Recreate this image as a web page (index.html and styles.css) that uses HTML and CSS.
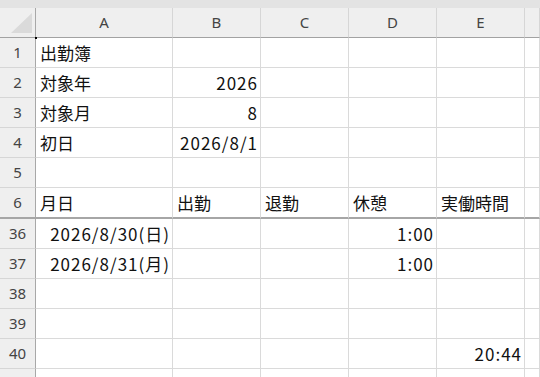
FILE: index.html
```html
<!DOCTYPE html>
<html lang="ja">
<head>
    <meta charset="UTF-8">
    <meta name="viewport" content="width=device-width, initial-scale=1.0">
    <title>出勤簿</title>
    <link rel="stylesheet" href="styles.css">
</head>
<body>
    <div class="topbar"></div>
    <div class="sheet">
        <table class="grid">
            <colgroup>
                <col class="c-hdr">
                <col class="c-a">
                <col class="c-std">
                <col class="c-std">
                <col class="c-std">
                <col class="c-std">
                <col class="c-rest">
            </colgroup>
            <tr class="col-heads">
                <th class="corner">
                    <svg width="36" height="29" viewBox="0 0 36 29"><polygon points="11,25 32,5 32,25" fill="#dadada"/></svg>
                </th>
                <th>A</th>
                <th>B</th>
                <th>C</th>
                <th>D</th>
                <th>E</th>
                <th></th>
            </tr>
            <tr>
                <th class="rownum">1</th>
                <td>出勤簿</td><td></td><td></td><td></td><td></td><td></td>
            </tr>
            <tr>
                <th class="rownum">2</th>
                <td>対象年</td><td class="num">2026</td><td></td><td></td><td></td><td></td>
            </tr>
            <tr>
                <th class="rownum">3</th>
                <td>対象月</td><td class="num">8</td><td></td><td></td><td></td><td></td>
            </tr>
            <tr>
                <th class="rownum">4</th>
                <td>初日</td><td class="num">2026/8/1</td><td></td><td></td><td></td><td></td>
            </tr>
            <tr>
                <th class="rownum">5</th>
                <td></td><td></td><td></td><td></td><td></td><td></td>
            </tr>
            <tr class="frozen">
                <th class="rownum">6</th>
                <td>月日</td><td>出勤</td><td>退勤</td><td>休憩</td><td>実働時間</td><td></td>
            </tr>
            <tr>
                <th class="rownum">36</th>
                <td class="num">2026/8/30(日)</td><td></td><td></td><td class="num">1:00</td><td></td><td></td>
            </tr>
            <tr>
                <th class="rownum">37</th>
                <td class="num">2026/8/31(月)</td><td></td><td></td><td class="num">1:00</td><td></td><td></td>
            </tr>
            <tr>
                <th class="rownum">38</th>
                <td></td><td></td><td></td><td></td><td></td><td></td>
            </tr>
            <tr>
                <th class="rownum">39</th>
                <td></td><td></td><td></td><td></td><td></td><td></td>
            </tr>
            <tr>
                <th class="rownum">40</th>
                <td></td><td></td><td></td><td></td><td class="num">20:44</td><td></td>
            </tr>
            <tr>
                <th class="rownum"></th>
                <td></td><td></td><td></td><td></td><td></td><td></td>
            </tr>
        </table>
        <div class="cursor-dot"></div>
    </div>
</body>
</html>
```

FILE: styles.css
```css
body {
    margin: 0;
    background-color: #ffffff;
    overflow: hidden;
    font-family: "Noto Sans CJK JP", "Noto Sans", sans-serif;
}
.topbar {
    height: 8px;
    background-color: #e3e3e3;
}
.sheet {
    position: relative;
    height: 369px;
    overflow: hidden;
}
.grid {
    border-collapse: separate;
    border-spacing: 0;
    table-layout: fixed;
    width: 540px;
}
.c-hdr { width: 36px; }
.c-a { width: 137px; }
.c-std { width: 88px; }
.c-rest { width: 15px; }

th, td {
    height: 29px;
    padding: 0;
    line-height: 29px;
    overflow: hidden;
    white-space: nowrap;
}
td {
    border-right: 1px solid #dadada;
    border-bottom: 1px solid #dadada;
    padding: 0 4px;
    font-size: 17px;
    color: #111;
    text-align: left;
}
td.num {
    text-align: right;
    padding-right: 2px;
    letter-spacing: 1px;
}
.col-heads th {
    background-color: #efefef;
    border-bottom: 1px solid #a2a2a2;
    border-right: 1px solid #d6d6d6;
    font-family: "Noto Sans", sans-serif;
    font-weight: normal;
    font-size: 15px;
    color: #444;
    text-align: center;
}
.col-heads th.corner {
    border-right: 1px solid #a8a8a8;
    line-height: 0;
}
.rownum {
    background-color: #efefef;
    border-right: 1px solid #a8a8a8;
    border-bottom: 1px solid #d6d6d6;
    font-family: "Noto Sans", sans-serif;
    font-weight: normal;
    font-size: 15px;
    color: #444;
    text-align: center;
}
.frozen td,
.frozen th {
    border-bottom: 2px solid #a6a6a6;
}
.cursor-dot {
    position: absolute;
    left: 35px;
    top: 29px;
    width: 2px;
    height: 2px;
    background-color: #000;
}
```
